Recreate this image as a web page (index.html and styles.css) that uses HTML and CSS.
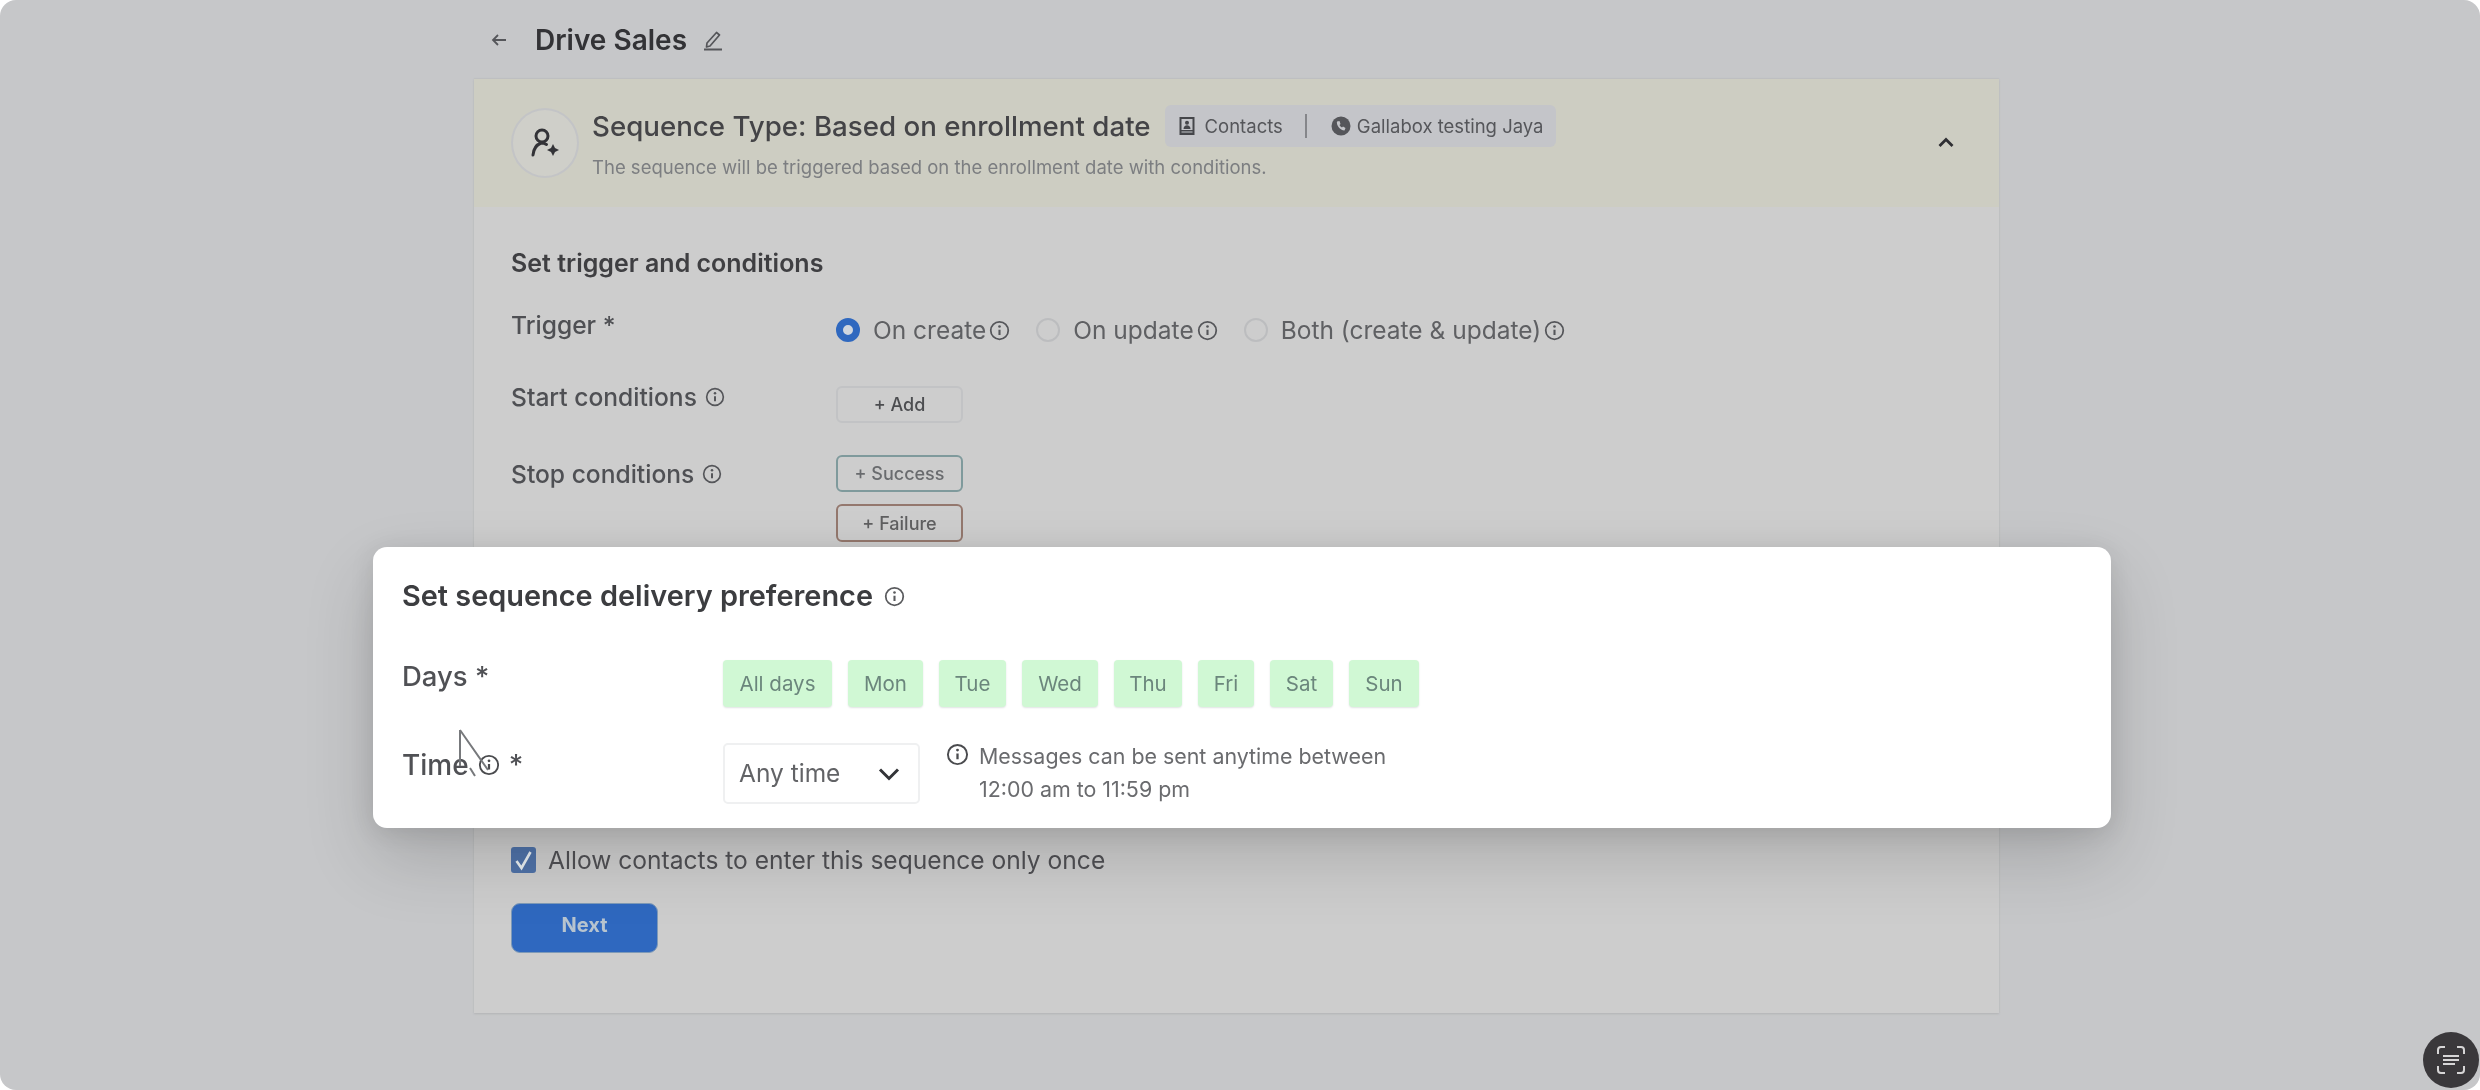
FILE: index.html
```html
<!DOCTYPE html>
<html lang="en">
<head>
<meta charset="utf-8">
<title>Drive Sales</title>
<link rel="stylesheet" href="styles.css">
</head>
<body>
<svg class="defs" width="0" height="0" aria-hidden="true">
  <symbol id="info" viewBox="0 0 24 24">
    <circle cx="12" cy="12" r="10" fill="none" stroke="currentColor" stroke-width="2"/>
    <path d="M12 11v6" fill="none" stroke="currentColor" stroke-width="2.4"/>
    <circle cx="12" cy="7.4" r="1.5" fill="currentColor"/>
  </symbol>
</svg>
<div class="screen">
  <header class="topbar">
    <svg class="back" viewBox="0 0 18 18"><path d="M16 9H3M8 4 3 9l5 5" fill="none" stroke="currentColor" stroke-width="1.8"/></svg>
    <h1 class="page-title">Drive Sales</h1>
    <svg class="edit" viewBox="0 0 22 22"><path d="M5 14 14.500 3.500l3 2.500L8 17l-3.500 1z" fill="none" stroke="currentColor" stroke-width="1.7" stroke-linejoin="round"/><path d="M2 20.500h18" stroke="currentColor" stroke-width="1.8"/></svg>
  </header>

  <main class="panel">
    <section class="panel-head">
      <div class="avatar">
        <svg viewBox="0 0 36 36" class="avatar-icon"><circle cx="15" cy="11" r="6" fill="none" stroke="currentColor" stroke-width="3"/><path d="M6 30c.5-6 3-10 8-12 2 0 4 .5 5.500 1.500" fill="none" stroke="currentColor" stroke-width="3" stroke-linecap="round"/><path d="M26 19l2 4 4 2-4 2-2 4-2-4-4-2 4-2z" fill="currentColor"/></svg>
      </div>
      <div class="head-text">
        <div class="head-line">
          <h2 class="seq-title">Sequence Type: Based on enrollment date</h2>
          <div class="chip">
            <svg class="chip-icon" viewBox="0 0 18 20"><path d="M1.500 1h15v18h-15z" fill="currentColor"/><rect x="3.500" y="3" width="11" height="11" fill="#c4c5c9"/><circle cx="9" cy="6.800" r="2" fill="currentColor"/><path d="M5.500 13c0-5 7-5 7 0z" fill="currentColor"/><path d="M3.500 16h11" stroke="#c4c5c9" stroke-width="1.200"/></svg>
            <span class="chip-a">Contacts</span>
            <span class="chip-sep"></span>
            <svg class="chip-wa" viewBox="0 0 20 20"><circle cx="10" cy="10" r="9.500" fill="currentColor"/><path d="M6 5.500c-1 3 3 9 7.500 9l1-2.500-2.500-1.500-1 1c-1-.5-2-1.500-2.500-2.500l1-1-1-3z" fill="#c4c5c9"/></svg>
            <span>Gallabox testing Jaya</span>
          </div>
        </div>
        <p class="seq-sub">The sequence will be triggered based on the enrollment date with conditions.</p>
      </div>
      <svg class="collapse" viewBox="0 0 18 12"><path d="M2.500 10 9 3.500l6.500 6.500" fill="none" stroke="currentColor" stroke-width="2.800"/></svg>
    </section>

    <section class="panel-body">
      <h3 class="section-title">Set trigger and conditions</h3>

      <div class="row row-trigger">
        <div class="label">Trigger *</div>
        <div class="radios">
          <span class="radio radio-on"></span><span class="radio-text">On create</span><svg class="info-s"><use href="#info"/></svg>
          <span class="radio radio-2"></span><span class="radio-text">On update</span><svg class="info-s"><use href="#info"/></svg>
          <span class="radio radio-2"></span><span class="radio-text">Both (create &amp; update)</span><svg class="info-s"><use href="#info"/></svg>
        </div>
      </div>

      <div class="row row-start">
        <div class="label">Start conditions <svg class="info-l"><use href="#info"/></svg></div>
        <div class="start-cell"><button class="mini">+ Add</button></div>
      </div>

      <div class="row row-stop">
        <div class="label">Stop conditions <svg class="info-l"><use href="#info"/></svg></div>
        <div class="stack">
          <button class="mini mini-ok">+ Success</button>
          <button class="mini mini-bad">+ Failure</button>
        </div>
      </div>

      <label class="once">
        <span class="check"><svg viewBox="0 0 24 26"><path d="M5 14l5 7 9-16" fill="none" stroke="#e8eef2" stroke-width="2.600"/></svg></span>
        Allow contacts to enter this sequence only once
      </label>
      <button class="next">Next</button>
    </section>
  </main>

  <section class="modal">
    <h3 class="modal-title">Set sequence delivery preference <svg class="info-m"><use href="#info"/></svg></h3>
    <div class="modal-row modal-days">
      <div class="modal-label days-label">Days *</div>
      <div class="days">
        <span class="day day-all">All days</span>
        <span class="day day-mon">Mon</span>
        <span class="day day-tue">Tue</span>
        <span class="day day-wed">Wed</span>
        <span class="day day-thu">Thu</span>
        <span class="day day-fri">Fri</span>
        <span class="day day-sat">Sat</span>
        <span class="day day-sun">Sun</span>
      </div>
    </div>
    <div class="modal-row modal-time">
      <div class="modal-label time-label">Time <svg class="info-t"><use href="#info"/></svg> <span class="star">*</span></div>
      <div class="time-ctrl">
        <div class="select">Any time
          <svg class="select-chev" viewBox="0 0 22 14"><path d="M2 2.500l9 9 9-9" fill="none" stroke="currentColor" stroke-width="3"/></svg>
        </div>
        <svg class="info-n"><use href="#info"/></svg>
        <p class="note">Messages can be sent anytime between<br>12:00 am to 11:59 pm</p>
      </div>
    </div>
    <svg class="cursor" viewBox="0 0 34 50"><path d="M2 2v36M2 2l28 40M12 40l5 8" fill="none" stroke="#77797c" stroke-width="2"/></svg>
  </section>

  <button class="scan" aria-label="Scan text">
    <svg viewBox="0 0 32 32"><path d="M3 10V6q0-3 3-3h4M22 3h4q3 0 3 3v4M29 22v4q0 3-3 3h-4M10 29H6q-3 0-3-3v-4" fill="none" stroke="#d6d5d6" stroke-width="2"/><path d="M8 12h16M8 16h16M8 20h12" stroke="#d6d5d6" stroke-width="2"/></svg>
  </button>
</div>
</body>
</html>
```
FILE: styles.css
```css
* { box-sizing: border-box; }
html, body { margin: 0; height: 100%; background: #fff; overflow: hidden; }
body { font-family: Inter, "Liberation Sans", sans-serif; color: #3f3f42; }
.defs { position: absolute; }
h1, h2, h3, p { margin: 0; }
button { font-family: inherit; }

.screen {
  position: relative;
  width: 2480px;
  height: 1090px;
  border-radius: 16px;
  background: #c6c7c9;
  overflow: hidden;
  padding-left: 474px;
  filter: blur(.7px);
}

.topbar { height: 79px; display: flex; align-items: center; color: #333336; }
.back { width: 18px; height: 18px; margin-left: 16px; color: #55565a; }
.page-title { font-size: 28px; font-weight: 600; margin-left: 27px; line-height: 30px; }
.edit { width: 22px; height: 22px; margin-left: 15px; color: #55565a; }

.panel {
  width: 1525px;
  height: 934px;
  background: #cdcdcd;
  box-shadow: 0 1px 2px #b2b3b5, 0 -1px 1px #bfc0c2;
}
.panel-head {
  height: 128px;
  background: #cdcdc2;
  display: flex;
  align-items: center;
  padding-left: 37px;
  position: relative;
}
.avatar {
  width: 68px;
  height: 70px;
  border-radius: 50%;
  border: 2px solid #c3c4c6;
  background: #cfcfc9;
  display: flex;
  align-items: center;
  justify-content: center;
  flex: none;
}
.avatar-icon { width: 36px; height: 36px; color: #333337; }
.head-text { margin-left: 13px; margin-top: -2px; }
.head-line { display: flex; align-items: center; height: 42px; }
.seq-title { font-size: 27.700px; font-weight: 500; color: #444447; white-space: nowrap; line-height: 34px; }
.chip {
  margin-left: 14px;
  height: 42px;
  width: 391px;
  padding-left: 13px;
  background: #c4c5c9;
  border-radius: 6px;
  display: flex;
  align-items: center;
  font-size: 18.500px;
  color: #55565a;
  white-space: nowrap;
}
.chip-icon { width: 18px; height: 20px; color: #45464a; flex: none; }
.chip-a { margin-left: 9px; }
.chip-sep { width: 2px; height: 24px; background: #85868a; margin: 0 24px 0 22px; }
.chip-wa { width: 20px; height: 20px; color: #55565a; margin-right: 6px; flex: none; }
.seq-sub { font-size: 18.500px; color: #7c7e81; margin-top: 8px; line-height: 24px; white-space: nowrap; }
.collapse { position: absolute; left: 1463px; top: 57px; width: 18px; height: 12px; color: #2f2f33; }

.panel-body { padding: 41px 0 0 37px; position: relative; }
.section-title { font-size: 25px; font-weight: 600; line-height: 30px; color: #3f3f42; }

.row { display: grid; grid-template-columns: 325px 1fr; align-items: start; }
.label { font-size: 24.600px; font-weight: 500; line-height: 30px; color: #4f5054; display: flex; align-items: center; gap: 8px; }
.row-trigger { margin-top: 32px; }
.row-start { margin-top: 37px; }
.row-stop { margin-top: 36px; }
.radios { display: flex; align-items: center; height: 30px; margin-top: 5px; font-size: 24.500px; color: #5f6063; }
.radio { width: 24px; height: 24px; border-radius: 50%; flex: none; }
.radio-on { background: #cfd6df; border: 7px solid #2f68bf; }
.radio-2 { border: 2px solid #bcbdbf; margin-left: 26px; }
.radio-text { margin-left: 13px; white-space: nowrap; }
.info-s { width: 21px; height: 21px; margin-left: 3px; color: #55565a; flex: none; }
.info-l { width: 20px; height: 20px; color: #55565a; flex: none; }

.mini {
  display: block;
  width: 127px;
  height: 37px;
  border-radius: 6px;
  background: transparent;
  border: 2px solid #c2c3c5;
  font-size: 18px;
  font-weight: 500;
  color: #4c4d50;
  padding: 0;
}
.stack { display: flex; flex-direction: column; gap: 12px; margin-top: -4px; }
.mini-ok { border-color: #7f9a9c; color: #696b6e; }
.mini-bad { border-color: #94786e; height: 38px; color: #5f5f60; }
.start-cell { margin-top: 4px; }

.once {
  position: relative;
  display: flex;
  align-items: center;
  gap: 12px;
  margin-top: 303px;
  font-size: 24.600px;
  line-height: 30px;
  color: #505054;
  white-space: nowrap;
}
.check { width: 25px; height: 26px; border-radius: 3px; background: #4f72a8; flex: none; display: block; }
.check svg { width: 25px; height: 26px; display: block; }
.next {
  display: block;
  margin-top: 28px;
  width: 147px;
  height: 50px;
  border: 1px solid #7e9ab8;
  border-radius: 9px;
  background: #2f68bf;
  color: #b7c4cf;
  font-size: 20px;
  font-weight: 700;
  padding: 0 0 6px;
}

.modal {
  position: absolute;
  left: 373px;
  top: 547px;
  width: 1738px;
  height: 281px;
  background: #fff;
  border-radius: 14px;
  padding: 32px 0 0 29px;
  box-shadow: 0 30px 70px rgba(0, 0, 0, .16), 0 4px 24px rgba(0, 0, 0, .1);
}
.modal-title {
  font-size: 28.900px;
  font-weight: 600;
  line-height: 34px;
  color: #3c3d40;
  display: flex;
  align-items: center;
  gap: 11px;
}
.info-m { width: 21px; height: 21px; color: #5a5b5e; }
.modal-row { display: grid; grid-template-columns: 321px 1fr; }
.modal-days { margin-top: 48px; }
.modal-time { margin-top: 35.500px; }
.modal-label { font-size: 27.500px; font-weight: 500; line-height: 34px; color: #505155; }
.days-label { margin-top: -2px; }
.days { display: flex; gap: 16px; margin-top: -1px; }
.day {
  height: 47px;
  background: #d0f8d4;
  border-radius: 4px;
  display: flex;
  align-items: center;
  justify-content: center;
  font-size: 20.500px;
  color: #6b867c;
  box-shadow: 0 1px 2px #dfe3e2;
}
.day-all { width: 109px; }
.day-mon { width: 75px; }
.day-tue { width: 67px; }
.day-wed { width: 76px; }
.day-thu { width: 68px; }
.day-fri { width: 56px; }
.day-sat { width: 63px; }
.day-sun { width: 70px; }

.time-label { display: flex; align-items: center; gap: 7px; margin-top: 5px; align-self: start; font-size: 28px; }
.time-label .star { margin-left: 2px; }
.info-t { width: 22px; height: 22px; color: #4a4b4e; margin-left: 2px; }
.time-ctrl { display: flex; align-items: flex-start; }
.select {
  width: 197px;
  height: 61px;
  border: 2px solid #eff0f1;
  border-radius: 5px;
  display: flex;
  align-items: center;
  padding-left: 14px;
  font-size: 24.500px;
  color: #626366;
  position: relative;
}
.select-chev { position: absolute; left: 153px; top: 22px; width: 22px; height: 14px; color: #333438; }
.info-n { width: 23px; height: 23px; margin: 0 10px 0 26px; color: #4a4b4e; flex: none; }
.note { font-size: 21.400px; line-height: 33px; color: #6a6b6e; white-space: nowrap; margin-top: -3px; }
.cursor { position: absolute; left: 85px; top: 181px; width: 34px; height: 50px; }

.scan {
  position: absolute;
  left: 2423px;
  top: 1032px;
  width: 56px;
  height: 56px;
  border-radius: 50%;
  border: 0;
  padding: 12px;
  background: #3a383b;
}
.scan svg { width: 32px; height: 32px; display: block; }
```
